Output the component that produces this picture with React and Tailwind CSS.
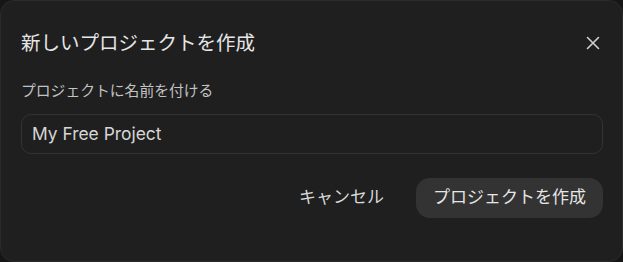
export default function App() {
  return (
    <div className="w-[623px] h-[262px] bg-[#161616] overflow-hidden" style={{ fontFamily: 'Inter, "Noto Sans CJK JP", sans-serif' }}>
      <div className="w-[623px] h-[262px] bg-[#1f1f1f] rounded-[14px] border border-[#2b2b2b] pl-5 pr-[19px] pt-[25px] flex flex-col">
        <div className="flex items-center justify-between h-[36px]">
          <h2 className="text-[19.5px] text-[#e6e6e6] leading-none">新しいプロジェクトを作成</h2>
          <button className="w-6 h-6 flex items-center justify-center text-[#d0d0d0] mr-[-2px] mt-[-3px]">
            <svg width="14" height="14" viewBox="0 0 14 14" fill="none" stroke="currentColor" strokeWidth="1.6" strokeLinecap="round">
              <path d="M1.5 1.5L12.5 12.5M12.5 1.5L1.5 12.5" />
            </svg>
          </button>
        </div>
        <label className="mt-[22px] text-[14.8px] text-[#c2c2c2] leading-none">プロジェクトに名前を付ける</label>
        <div className="mt-[15px] h-[40px] rounded-[10px] border border-[#333333] flex items-center px-[10px]">
          <span className="text-[17.4px] text-[#d6d6d6]">My Free Project</span>
        </div>
        <div className="mt-6 flex justify-end items-center gap-4">
          <button className="h-[40px] px-[16px] text-[17px] text-[#d8d8d8] rounded-xl">キャンセル</button>
          <button className="h-[40px] px-[17px] text-[17px] text-[#e6e6e6] bg-[#333333] rounded-[14px]">プロジェクトを作成</button>
        </div>
      </div>
    </div>
  );
}
